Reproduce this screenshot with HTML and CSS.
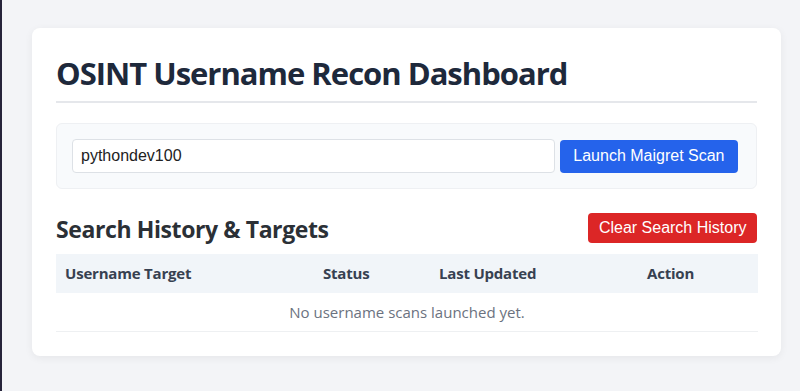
FILE: index.html
```html
<!DOCTYPE html>
<html lang="en">
<head>
    <meta charset="UTF-8">
    <meta name="viewport" content="width=device-width, initial-scale=1.0">
    <title>OSINT Username Recon Dashboard</title>
    <link rel="stylesheet" href="styles.css">
</head>
<body>
    <div class="container">
        <h1>OSINT Username Recon Dashboard</h1>

        <div class="search-box">
            <input type="text" class="username-input" id="usernameInput" value="pythondev100">
            <button class="btn btn-primary" id="launchBtn">Launch Maigret Scan</button>
        </div>

        <div class="section-header">
            <h2>Search History &amp; Targets</h2>
            <button class="btn btn-danger" id="clearBtn">Clear Search History</button>
        </div>

        <table class="history-table">
            <thead>
                <tr>
                    <th class="col-user">Username Target</th>
                    <th class="col-status">Status</th>
                    <th class="col-updated">Last Updated</th>
                    <th class="col-action">Action</th>
                </tr>
            </thead>
            <tbody id="historyBody">
                <tr>
                    <td colspan="4" class="no-data">No username scans launched yet.</td>
                </tr>
            </tbody>
        </table>
    </div>
</body>
</html>
```

FILE: styles.css
```css
* {
    margin: 0;
    padding: 0;
    box-sizing: border-box;
}

body {
    font-family: 'Open Sans', 'Noto Sans', sans-serif;
    background: #f3f4f7;
    color: #333;
    border-left: 2px solid #26243a;
    min-height: 100vh;
    padding: 28px 19px 0 30px;
}

.container {
    background: white;
    border-radius: 8px;
    padding: 24px;
    box-shadow: 0 2px 8px rgba(0,0,0,0.06);
}

h1 {
    font-size: 31px;
    font-weight: 700;
    letter-spacing: -1px;
    color: #1e293b;
    padding-bottom: 7px;
    border-bottom: 2px solid #e5e7eb;
    margin-bottom: 20px;
}

.search-box {
    display: flex;
    gap: 5px;
    align-items: center;
    background: #f8fafc;
    border: 1px solid #eef0f3;
    border-radius: 6px;
    padding: 15px 18px 15px 15px;
    margin-bottom: 22px;
}

.username-input {
    flex: 1;
    height: 34px;
    padding: 0 8px;
    border: 1px solid #dde1e6;
    border-radius: 4px;
    font-family: 'Liberation Sans', Arial, sans-serif;
    font-size: 16px;
    color: #222;
    background: white;
}

.btn {
    border: none;
    border-radius: 4px;
    color: white;
    font-family: 'Liberation Sans', Arial, sans-serif;
    font-size: 16px;
    cursor: pointer;
}

.btn-primary {
    background: #2563eb;
    height: 33px;
    padding: 0 13.5px;
}

.btn-danger {
    background: #dc2626;
    height: 30px;
    padding: 0 10.5px;
}

.section-header {
    display: flex;
    justify-content: space-between;
    align-items: center;
    margin-bottom: 9px;
}

h2 {
    font-size: 23px;
    font-weight: 700;
    letter-spacing: -0.4px;
    color: #2b3036;
    padding-top: 2px;
}

.history-table {
    width: 100%;
    border-collapse: collapse;
    table-layout: fixed;
}

.history-table th {
    background: #f1f5f9;
    color: #374151;
    font-size: 15px;
    font-weight: 700;
    letter-spacing: -0.2px;
    line-height: 21px;
    text-align: left;
    padding: 9px;
}

.col-user { width: 258px; }
.col-status { width: 116px; }
.col-updated { width: 208px; }
.col-action { width: 120px; }

.history-table td {
    padding: 9px;
    line-height: 20px;
    border-bottom: 1px solid #eef0f2;
}

.no-data {
    text-align: center;
    color: #6b7280;
    font-size: 15px;
}
```
